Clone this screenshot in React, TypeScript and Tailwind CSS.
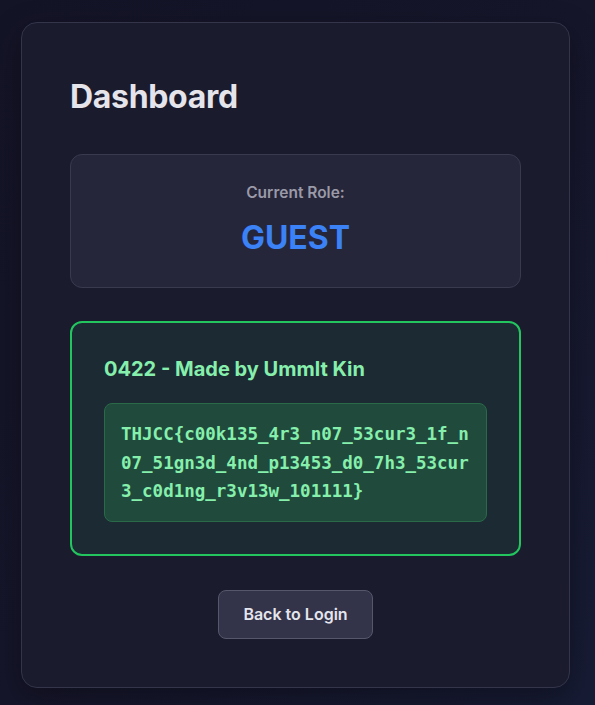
const flag =
  "THJCC{c00k135_4r3_n07_53cur3_1f_n07_51gn3d_4nd_p13453_d0_7h3_53cur3_c0d1ng_r3v13w_101111}";

export default function App() {
  return (
    <div
      className="min-h-[705px] bg-gradient-to-br from-[#141427] via-[#16162b] to-[#171c35] pt-[22px] pb-[17px]"
      style={{ fontFamily: "Inter, 'Noto Sans', sans-serif" }}
    >
      <div className="ml-[21px] w-[549px] rounded-2xl border border-[#34344a] bg-[#1b1b2e] px-12 pt-[54px] pb-12 shadow-[0_10px_30px_rgba(0,0,0,0.35)]">
        <h1 className="mb-[37px] text-[32px] leading-10 font-bold tracking-[-0.01em] text-[#e4e4ea]">
          Dashboard
        </h1>

        <div className="rounded-xl border border-[#3a3a4f] bg-[#26263a] px-7 pt-[28px] pb-[29px] text-center">
          <p className="text-[15.5px] leading-5 font-semibold text-[#9a9aa8]">Current Role:</p>
          <p className="mt-[15px] text-[32px] leading-10 font-bold text-[#3b82f6]">GUEST</p>
        </div>

        <div className="mt-[33px] rounded-xl border-2 border-[#22c55e] bg-[#1b2a33] p-8">
          <h2 className="mb-5 text-xl leading-7 font-bold text-[#86efac]">
            0422 - Made by Ummlt Kin
          </h2>
          <div className="rounded-lg border border-[#2a6a49] bg-[#1f4a3c] px-4 pt-4 pb-[15px]">
            <p
              className="text-[17.5px] leading-[28.5px] font-bold break-all text-[#86efac]"
              style={{ fontFamily: "'DejaVu Sans Mono', 'Liberation Mono', monospace" }}
            >
              {flag}
            </p>
          </div>
        </div>

        <div className="mt-[34px] flex justify-center">
          <button className="rounded-lg border border-[#57576c] bg-[#33334a] px-6 py-3 text-base leading-[23px] font-semibold text-[#e5e5ec]">
            Back to Login
          </button>
        </div>
      </div>
    </div>
  );
}
